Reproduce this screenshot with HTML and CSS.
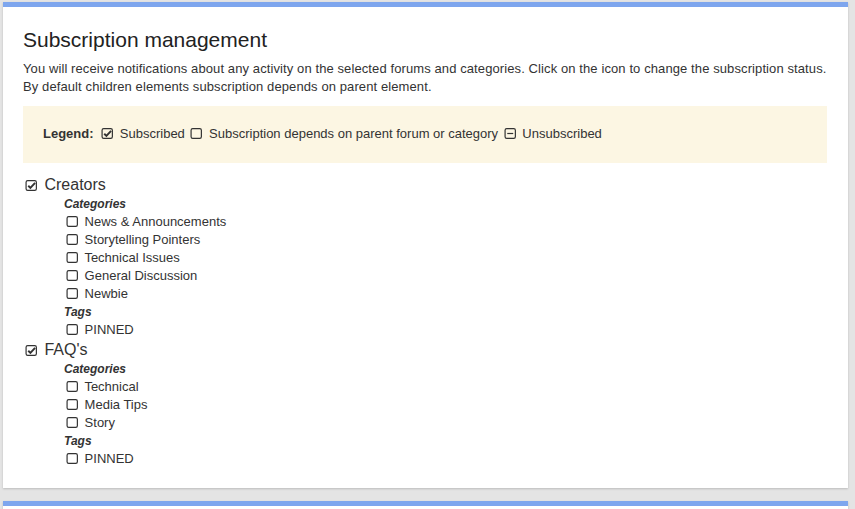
FILE: index.html
```html
<!DOCTYPE html>
<html lang="en">
<head>
  <meta charset="UTF-8">
  <meta name="viewport" content="width=device-width, initial-scale=1.0">
  <title>Subscription management</title>
  <link rel="stylesheet" href="styles.css">
</head>
<body>
  <div class="panel">
    <h2>Subscription management</h2>
    <p class="intro">You will receive notifications about any activity on the selected forums and categories. Click on the icon to change the subscription status.<br>By default children elements subscription depends on parent element.</p>

    <div class="legend">
      <b>Legend:</b>
      <svg class="icon" viewBox="0 0 12 12"><rect x="1" y="1.5" width="9.5" height="9" rx="1.5"/><path class="tick" d="M3 6.2l2 2 4.3-4.6"/></svg> Subscribed
      <svg class="icon" viewBox="0 0 12 12"><rect x="1" y="1.5" width="9.5" height="9" rx="1.5"/></svg> Subscription depends on parent forum or category
      <svg class="icon" viewBox="0 0 12 12"><rect x="1" y="1.5" width="9.5" height="9" rx="1.5"/><path d="M3 6h5.5"/></svg> Unsubscribed
    </div>

    <div class="forums">
      <div class="forum">
        <div class="forum-name"><svg class="icon" viewBox="0 0 12 12"><rect x="1" y="1.5" width="9.5" height="9" rx="1.5"/><path class="tick" d="M3 6.2l2 2 4.3-4.6"/></svg> Creators</div>
        <div class="children">
          <div class="group">Categories</div>
          <div class="item"><svg class="icon" viewBox="0 0 12 12"><rect x="1" y="1.5" width="9.5" height="9" rx="1.5"/></svg> News &amp; Announcements</div>
          <div class="item"><svg class="icon" viewBox="0 0 12 12"><rect x="1" y="1.5" width="9.5" height="9" rx="1.5"/></svg> Storytelling Pointers</div>
          <div class="item"><svg class="icon" viewBox="0 0 12 12"><rect x="1" y="1.5" width="9.5" height="9" rx="1.5"/></svg> Technical Issues</div>
          <div class="item"><svg class="icon" viewBox="0 0 12 12"><rect x="1" y="1.5" width="9.5" height="9" rx="1.5"/></svg> General Discussion</div>
          <div class="item"><svg class="icon" viewBox="0 0 12 12"><rect x="1" y="1.5" width="9.5" height="9" rx="1.5"/></svg> Newbie</div>
          <div class="group">Tags</div>
          <div class="item"><svg class="icon" viewBox="0 0 12 12"><rect x="1" y="1.5" width="9.5" height="9" rx="1.5"/></svg> PINNED</div>
        </div>
      </div>

      <div class="forum">
        <div class="forum-name"><svg class="icon" viewBox="0 0 12 12"><rect x="1" y="1.5" width="9.5" height="9" rx="1.5"/><path class="tick" d="M3 6.2l2 2 4.3-4.6"/></svg> FAQ's</div>
        <div class="children">
          <div class="group">Categories</div>
          <div class="item"><svg class="icon" viewBox="0 0 12 12"><rect x="1" y="1.5" width="9.5" height="9" rx="1.5"/></svg> Technical</div>
          <div class="item"><svg class="icon" viewBox="0 0 12 12"><rect x="1" y="1.5" width="9.5" height="9" rx="1.5"/></svg> Media Tips</div>
          <div class="item"><svg class="icon" viewBox="0 0 12 12"><rect x="1" y="1.5" width="9.5" height="9" rx="1.5"/></svg> Story</div>
          <div class="group">Tags</div>
          <div class="item"><svg class="icon" viewBox="0 0 12 12"><rect x="1" y="1.5" width="9.5" height="9" rx="1.5"/></svg> PINNED</div>
        </div>
      </div>
    </div>
  </div>
  <div class="panel next"></div>
</body>
</html>
```

FILE: styles.css
```css
body {
  margin: 0;
  background: #e4e4e4;
  font-family: "Liberation Sans", Arial, sans-serif;
  color: #333;
}

.panel {
  margin: 2px 7px 0 3px;
  padding: 20px 20px 20px 20px;
  background: #fff;
  border-top: 5px solid #7ea6ee;
  box-shadow: 0 1px 2px rgba(0, 0, 0, 0.18);
}

.panel.next {
  margin-top: 13px;
  height: 40px;
  padding: 0;
}

h2 {
  margin: 1px 0 8px;
  font-size: 21px;
  line-height: 24px;
  font-weight: normal;
  color: #222;
}

.intro {
  margin: 0 0 10px;
  font-size: 13px;
  line-height: 18px;
  letter-spacing: 0.1px;
}

.legend {
  background: #fcf6e3;
  padding: 19px 20px 20px;
  font-size: 13px;
  line-height: 18px;
  margin-right: 1px;
}

.legend b {
  margin-right: 2px;
}

.legend .icon {
  margin: 0 2px 0 2px;
}

.icon {
  width: 13px;
  height: 13px;
  vertical-align: -2px;
  fill: none;
  stroke: #333;
  stroke-width: 1.1;
}

.icon .tick {
  stroke-width: 1.8;
}

.forums {
  margin-top: 11px;
  font-size: 13px;
}

.forum-name {
  font-size: 16px;
  line-height: 21px;
  padding-left: 2px;
}

.forum-name .icon {
  margin-right: 2px;
}

.children {
  padding-left: 41px;
}

.group {
  font-size: 12px;
  font-weight: bold;
  font-style: italic;
  line-height: 18px;
}

.item {
  line-height: 18px;
  padding-left: 2px;
}

.item .icon {
  margin-right: 2px;
}
```
